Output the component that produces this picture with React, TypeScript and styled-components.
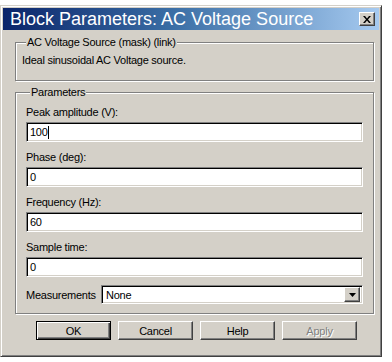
import React from 'react';
import styled, { createGlobalStyle } from 'styled-components';

const GlobalStyle = createGlobalStyle`
  html, body {
    margin: 0;
    padding: 0;
    background: #ffffff;
  }
  body {
    font-family: "Liberation Sans", Arial, sans-serif;
    font-size: 11px;
    color: #000000;
  }
`;

const Window = styled.div`
  width: 382px;
  height: 352px;
  margin-top: 5px;
  box-sizing: border-box;
  background: #d4d0c8;
  border: 1px solid;
  border-color: #d4d0c8 #404040 #404040 #d4d0c8;
  box-shadow: inset 1px 1px #ffffff, inset -1px -1px #808080;
  padding: 2px;
  display: flex;
  flex-direction: column;
`;

const TitleBar = styled.div`
  height: 22px;
  display: flex;
  align-items: center;
  justify-content: space-between;
  padding: 0 4px 0 7px;
  background: linear-gradient(90deg, #0a246a 0%, #3a6ea5 45%, #a6caf0 100%);
`;

const TitleText = styled.span`
  color: #ffffff;
  font-size: 18px;
  line-height: 22px;
  white-space: nowrap;
`;

const CloseButton = styled.div`
  width: 16px;
  height: 14px;
  box-sizing: border-box;
  background: #d4d0c8;
  border: 1px solid;
  border-color: #ffffff #404040 #404040 #ffffff;
  box-shadow: inset -1px -1px #808080;
  display: flex;
  align-items: center;
  justify-content: center;
`;

const Body = styled.div`
  flex: 1;
  display: flex;
  flex-direction: column;
  padding: 6px 5px 0 12px;
`;

const Group = styled.fieldset<{ $pad: string; $gap?: number }>`
  margin: ${({ $gap }) => ($gap ? `${$gap}px 0 0 0` : '0')};
  padding: ${({ $pad }) => $pad};
  border: 1px solid #808080;
  box-shadow: inset 1px 1px #ffffff, 1px 1px #ffffff;
  min-width: 0;
`;

const GroupTitle = styled.legend`
  margin-left: 4px;
  padding: 0 1px;
  font-size: 11px;
  line-height: 13px;
  background: #d4d0c8;
  letter-spacing: -0.25px;
`;

const Description = styled.div`
  font-size: 11px;
  line-height: 14px;
  letter-spacing: -0.25px;
`;

const ParamLabel = styled.div`
  font-size: 11px;
  line-height: 14px;
  letter-spacing: -0.25px;
  margin-bottom: 3px;
`;

const Field = styled.div`
  height: 20px;
  box-sizing: border-box;
  background: #ffffff;
  border: 1px solid;
  border-color: #808080 #ffffff #ffffff #808080;
  box-shadow: inset 1px 1px #000000, inset -1px -1px #d4d0c8;
  padding: 0 3px;
  display: flex;
  align-items: center;
  font-size: 11px;
  letter-spacing: -0.25px;
  margin-bottom: 8px;
`;

const Caret = styled.span`
  display: inline-block;
  width: 1px;
  height: 13px;
  background: #000000;
`;

const SelectRow = styled.div`
  display: flex;
  align-items: center;
  gap: 4px;
  margin-top: 2px;
`;

const SelectLabel = styled.span`
  width: 71px;
  font-size: 11px;
  letter-spacing: -0.25px;
`;

const Select = styled.div`
  flex: 1;
  height: 19px;
  box-sizing: border-box;
  background: #ffffff;
  border: 1px solid;
  border-color: #808080 #ffffff #ffffff #808080;
  box-shadow: inset 1px 1px #000000, inset -1px -1px #d4d0c8;
  padding: 2px 2px 2px 4px;
  display: flex;
  align-items: center;
  justify-content: space-between;
  font-size: 11px;
  letter-spacing: -0.25px;
`;

const DropButton = styled.div`
  width: 16px;
  height: 15px;
  box-sizing: border-box;
  background: #d4d0c8;
  border: 1px solid;
  border-color: #ffffff #404040 #404040 #ffffff;
  box-shadow: inset -1px -1px #808080;
  display: flex;
  align-items: center;
  justify-content: center;
`;

const ButtonRow = styled.div`
  display: flex;
  gap: 7px;
  padding: 7px 0 0 21px;
`;

const Button = styled.div<{ $default?: boolean; $disabled?: boolean }>`
  width: 75px;
  height: 19px;
  box-sizing: border-box;
  background: #d4d0c8;
  border: 1px solid;
  border-color: ${({ $default }) => ($default ? '#000000' : '#ffffff #404040 #404040 #ffffff')};
  box-shadow: ${({ $default }) =>
    $default
      ? 'inset 1px 1px #ffffff, inset -1px -1px #404040, inset -2px -2px #808080'
      : 'inset -1px -1px #808080'};
  display: flex;
  align-items: center;
  justify-content: center;
  font-size: 11px;
  letter-spacing: -0.25px;
  color: ${({ $disabled }) => ($disabled ? '#808080' : '#000000')};
  text-shadow: ${({ $disabled }) => ($disabled ? '1px 1px #ffffff' : 'none')};
`;

const params = [
  { label: 'Peak amplitude (V):', value: '100', caret: true },
  { label: 'Phase (deg):', value: '0' },
  { label: 'Frequency (Hz):', value: '60' },
  { label: 'Sample time:', value: '0' },
];

export default function App() {
  return (
    <>
      <GlobalStyle />
      <Window>
        <TitleBar>
          <TitleText>Block Parameters: AC Voltage Source</TitleText>
          <CloseButton>
            <svg width="8" height="7" viewBox="0 0 8 7">
              <path d="M0 0h2l2 2.5L6 0h2L5 3.5 8 7H6L4 4.5 2 7H0l3-3.5z" fill="#000" />
            </svg>
          </CloseButton>
        </TitleBar>
        <Body>
          <Group $pad="4px 6px 13px 6px">
            <GroupTitle>AC Voltage Source (mask) (link)</GroupTitle>
            <Description>Ideal sinusoidal AC Voltage source.</Description>
          </Group>
          <Group $pad="6px 10px 9px 10px" $gap={5}>
            <GroupTitle>Parameters</GroupTitle>
            {params.map((p) => (
              <div key={p.label}>
                <ParamLabel>{p.label}</ParamLabel>
                <Field>
                  {p.value}
                  {p.caret && <Caret />}
                </Field>
              </div>
            ))}
            <SelectRow>
              <SelectLabel>Measurements</SelectLabel>
              <Select>
                <span>None</span>
                <DropButton>
                  <svg width="7" height="4" viewBox="0 0 7 4">
                    <path d="M0 0h7L3.5 4z" fill="#000" />
                  </svg>
                </DropButton>
              </Select>
            </SelectRow>
          </Group>
          <ButtonRow>
            <Button $default>OK</Button>
            <Button>Cancel</Button>
            <Button>Help</Button>
            <Button $disabled>Apply</Button>
          </ButtonRow>
        </Body>
      </Window>
    </>
  );
}
